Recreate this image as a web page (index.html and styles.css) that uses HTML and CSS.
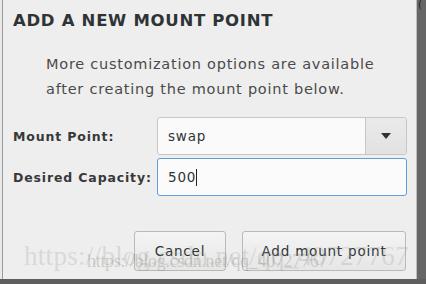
FILE: index.html
```html
<!DOCTYPE html>
<html>
<head>
<meta charset="utf-8">
<link rel="stylesheet" href="styles.css">
</head>
<body>
<div class="screen">
  <div class="dialog">
    <h1 class="title">ADD A NEW MOUNT POINT</h1>
    <p class="info">More customization options are available<br>after creating the mount point below.</p>
    <div class="form">
      <label class="label">Mount Point:</label>
      <div class="combo">
        <span class="combo-text">swap</span>
        <span class="combo-btn"><svg width="10" height="6" viewBox="0 0 10 6"><path d="M0 0H10L5 6Z" fill="#2e3436"/></svg></span>
      </div>
      <label class="label">Desired Capacity:</label>
      <div class="entry"><span class="entry-text">500</span><span class="caret"></span></div>
    </div>
    <div class="actions">
      <button class="btn btn-cancel">Cancel</button>
      <button class="btn btn-add">Add mount point</button>
    </div>
    <div class="wm wm1">https://blog.csdn.net/qq_40727767</div>
    <div class="wm wm2">https://blog.csdn.net/qq_40727767</div>
  </div>
  <div class="side"><span class="side-glyph">(</span></div>
</div>
</body>
</html>
```

FILE: styles.css
```css
html, body {
  margin: 0;
  padding: 0;
  background: #5e5e5e;
  width: 426px;
  height: 284px;
  overflow: hidden;
}
.screen {
  display: flex;
  height: 279px;
  background: #e9e9e9;
}
.dialog {
  position: relative;
  width: 415px;
  margin-left: 2px;
  border-left: 1px solid #9a9a9a;
  border-right: 1px solid #bdbdbd;
  background: #eeeeee;
  display: flex;
  flex-direction: column;
  padding: 0 10px 0 10px;
  box-sizing: border-box;
  font-family: "DejaVu Sans", sans-serif;
  color: #2e3436;
  overflow: hidden;
}
.side {
  flex: 1;
  background: #666666;
  position: relative;
}
.side-glyph {
  position: absolute;
  left: 1px;
  top: 0;
  font-family: "DejaVu Sans", sans-serif;
  font-size: 10px;
  line-height: 10px;
  color: #222;
}
.title {
  margin: 11px 0 0 0;
  font-size: 16.5px;
  font-weight: 600;
  letter-spacing: 0.7px;
  line-height: 20px;
  color: #2e3436;
}
.info {
  margin: 21px 0 0 33px;
  font-size: 14.5px;
  letter-spacing: 0.75px;
  line-height: 25px;
  color: #4a4a4a;
}
.form {
  margin-top: 15px;
  display: grid;
  grid-template-columns: 144px 250px;
  row-gap: 3px;
  align-items: center;
}
.label {
  font-size: 12.5px;
  font-weight: bold;
  letter-spacing: 0.85px;
  color: #383838;
}
.combo {
  height: 38px;
  box-sizing: border-box;
  border: 1px solid #c6c6c6;
  border-radius: 3px;
  background: #fafafa;
  display: flex;
}
.combo-text, .entry-text {
  font-size: 13.5px;
  letter-spacing: 0.8px;
  color: #2e3436;
  padding-left: 10px;
  align-self: center;
}
.combo-text { flex: 1; }
.combo-btn {
  width: 40px;
  border-left: 1px solid #c6c6c6;
  background: linear-gradient(#eaeaea, #e2e2e2);
  border-radius: 0 3px 3px 0;
  display: flex;
  align-items: center;
  justify-content: center;
}
.entry {
  height: 38px;
  box-sizing: border-box;
  border: 1px solid #5e9fe0;
  border-radius: 3px;
  background: #fbfbfb;
  display: flex;
  align-items: center;
}
.caret {
  width: 1px;
  height: 17px;
  background: #222;
  margin-left: 0;
}
.actions {
  margin-top: 35px;
  display: flex;
  justify-content: flex-end;
  gap: 16px;
}
.btn {
  height: 40px;
  box-sizing: border-box;
  border: 1px solid #b9b9b9;
  border-radius: 3px;
  background: linear-gradient(#f4f4f4, #e6e6e6);
  font-family: "DejaVu Sans", sans-serif;
  font-size: 13.5px;
  letter-spacing: 0.8px;
  color: #2e3436;
  padding: 0;
}
.btn-cancel { width: 92px; }
.btn-add { width: 164px; }
.wm {
  position: absolute;
  font-family: "Liberation Serif", serif;
  white-space: nowrap;
  pointer-events: none;
}
.wm1 {
  left: 21px;
  top: 241px;
  font-size: 27px;
  letter-spacing: 0.3px;
  color: rgba(160, 160, 150, 0.28);
}
.wm2 {
  left: 84px;
  top: 251px;
  font-size: 18px;
  letter-spacing: -0.3px;
  color: rgba(120, 120, 110, 0.3);
}
```
